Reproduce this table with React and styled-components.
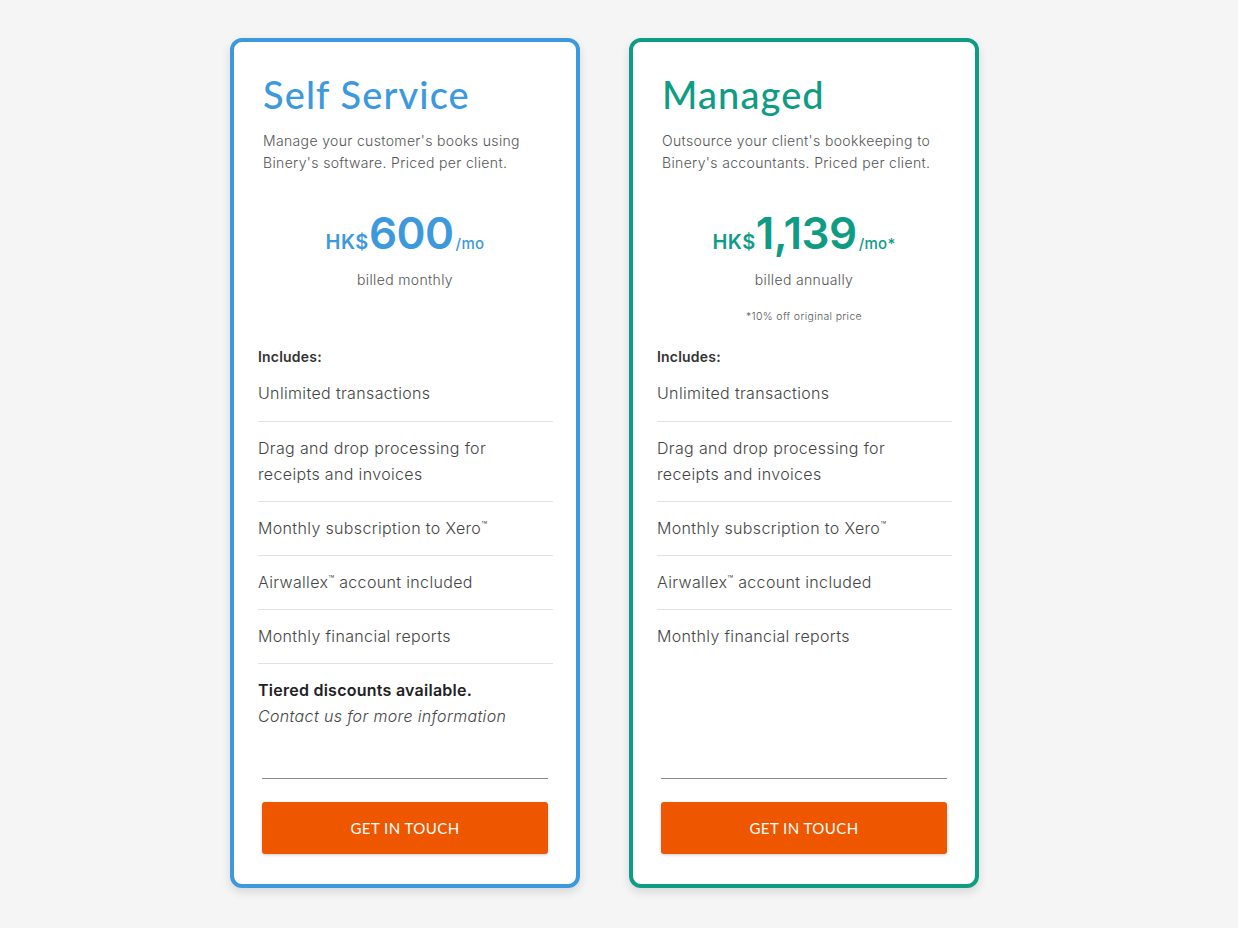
import React from "react";
import styled, { createGlobalStyle } from "styled-components";

const Global = createGlobalStyle`
  html, body { margin: 0; padding: 0; background: #f5f5f5; }
  body { font-family: Inter, "Noto Sans", sans-serif; color: #444; letter-spacing: 0.35px; }
  * { box-sizing: border-box; }
`;

const Page = styled.div`
  min-height: 928px;
  display: flex;
  align-items: flex-start;
  gap: 49px;
  padding: 38px 0 0 230px;
`;

const Card = styled.div`
  width: 350px;
  height: 850px;
  background: #fff;
  border: 4px solid ${(p) => p.$color};
  border-radius: 12px;
  box-shadow: 0 4px 10px rgba(0, 0, 0, 0.12);
  display: flex;
  flex-direction: column;
`;

const Header = styled.div`
  padding: 29px 29px 0 29px;
`;

const Title = styled.h2`
  margin: 0;
  font-family: Lato, "Open Sans", sans-serif;
  font-weight: 500;
  font-size: 38px;
  line-height: 46px;
  letter-spacing: 1.1px;
  color: ${(p) => p.$color};
`;

const Desc = styled.p`
  margin: 13px 0 0;
  font-size: 14px;
  line-height: 22px;
  font-weight: 300;
  color: #555;
`;

const PriceBlock = styled.div`
  margin-top: 31px;
  text-align: center;
  color: ${(p) => p.$color};
`;

const PriceLine = styled.div`
  display: flex;
  align-items: baseline;
  justify-content: center;
  font-weight: 600;
  line-height: 56px;
  letter-spacing: 0;
`;

const Currency = styled.span`
  font-size: 20px;
  letter-spacing: 0.5px;
`;

const Amount = styled.span`
  font-size: 44px;
  letter-spacing: -0.5px;
`;

const Per = styled.span`
  font-size: 15px;
  font-weight: 500;
  margin-left: 2px;
  letter-spacing: 0.3px;
`;

const Billed = styled.div`
  margin-top: -3px;
  font-size: 14px;
  line-height: 22px;
  font-weight: 300;
  color: #555;
`;

const Note = styled.div`
  margin-top: 19px;
  font-size: 10.5px;
  line-height: 14px;
  font-weight: 300;
  color: #555;
`;

const Features = styled.div`
  flex: 1;
  padding: 0 23px 0 24px;
  margin-top: ${(p) => p.$top}px;
`;

const Includes = styled.div`
  font-size: 14px;
  font-weight: 600;
  line-height: 20px;
  color: #333;
  letter-spacing: 0.2px;
  margin-bottom: 4px;
`;

const Item = styled.div`
  font-size: 16px;
  font-weight: 300;
  line-height: 26px;
  color: #444;
  padding: ${(p) => (p.$first ? "9px 0 15px" : "13px 0 14px")};
  border-bottom: ${(p) => (p.$last ? "none" : "1px solid #e2e2e2")};
`;

const Tm = styled.sup`
  font-size: 10px;
  vertical-align: top;
  position: relative;
  top: -3px;
  letter-spacing: 0;
`;

const Extra = styled.div`
  padding-top: 13px;
  font-size: 16px;
  line-height: 26px;
  color: #444;
`;

const Strong = styled.div`
  font-weight: 600;
  color: #222;
  letter-spacing: 0.25px;
`;

const Em = styled.div`
  font-style: italic;
  font-weight: 300;
`;

const Footer = styled.div`
  padding: 0 28px 30px;
`;

const Rule = styled.div`
  height: 1px;
  background: #8a8a8a;
  margin-bottom: 23px;
`;

const Button = styled.button`
  width: 100%;
  height: 52px;
  border: none;
  border-radius: 3px;
  background: #ee5700;
  color: #fff;
  font-family: Lato, "Open Sans", sans-serif;
  font-size: 15px;
  font-weight: 400;
  letter-spacing: 0.45px;
  box-shadow: 0 1px 3px rgba(0, 0, 0, 0.2);
  cursor: pointer;
`;

const plans = [
  {
    title: "Self Service",
    color: "#3d99dd",
    desc: "Manage your customer's books using Binery's software. Priced per client.",
    amount: "600",
    per: "/mo",
    billed: "billed monthly",
    note: null,
    extra: true,
  },
  {
    title: "Managed",
    color: "#0f9c85",
    desc: "Outsource your client's bookkeeping to Binery's accountants. Priced per client.",
    amount: "1,139",
    per: "/mo*",
    billed: "billed annually",
    note: "*10% off original price",
    extra: false,
  },
];

const features = [
  <>Unlimited transactions</>,
  <>Drag and drop processing for<br />receipts and invoices</>,
  <>Monthly subscription to Xero<Tm>™</Tm></>,
  <>Airwallex<Tm>™</Tm> account included</>,
  <>Monthly financial reports</>,
];

export default function App() {
  return (
    <>
      <Global />
      <Page>
        {plans.map((p) => (
          <Card key={p.title} $color={p.color}>
            <Header>
              <Title $color={p.color}>{p.title}</Title>
              <Desc>{p.desc}</Desc>
              <PriceBlock $color={p.color}>
                <PriceLine>
                  <Currency>HK$</Currency>
                  <Amount>{p.amount}</Amount>
                  <Per>{p.per}</Per>
                </PriceLine>
                <Billed>{p.billed}</Billed>
                {p.note && <Note>{p.note}</Note>}
              </PriceBlock>
            </Header>
            <Features $top={p.note ? 23 : 56}>
              <Includes>Includes:</Includes>
              {features.map((f, i) => (
                <Item
                  key={i}
                  $first={i === 0}
                  $last={!p.extra && i === features.length - 1}
                >
                  {f}
                </Item>
              ))}
              {p.extra && (
                <Extra>
                  <Strong>Tiered discounts available.</Strong>
                  <Em>Contact us for more information</Em>
                </Extra>
              )}
            </Features>
            <Footer>
              <Rule />
              <Button>GET IN TOUCH</Button>
            </Footer>
          </Card>
        ))}
      </Page>
    </>
  );
}
